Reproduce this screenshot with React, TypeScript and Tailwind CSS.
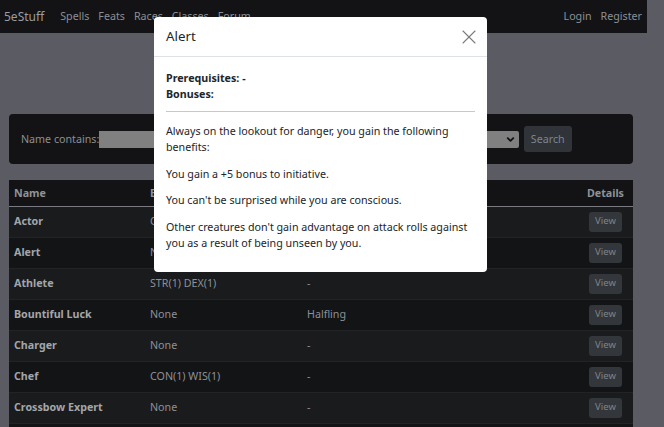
import { X, ChevronDown } from "lucide-react";

interface FeatRow {
  name: string;
  bonus: string;
  prereq: string;
}

const FEATS: FeatRow[] = [
  { name: "Actor", bonus: "CHA(1)", prereq: "-" },
  { name: "Alert", bonus: "None", prereq: "-" },
  { name: "Athlete", bonus: "STR(1) DEX(1)", prereq: "-" },
  { name: "Bountiful Luck", bonus: "None", prereq: "Halfling" },
  { name: "Charger", bonus: "None", prereq: "-" },
  { name: "Chef", bonus: "CON(1) WIS(1)", prereq: "-" },
  { name: "Crossbow Expert", bonus: "None", prereq: "-" },
  { name: "Defensive Duelist", bonus: "None", prereq: "DEX 13" },
];

function NavBar() {
  return (
    <nav className="flex h-[33px] items-center bg-[#131315] pl-[4px] pr-[5px] text-[10.7px] text-[#8b8f94]">
      <span className="mr-[16px] text-[12px] text-[#9a9da2]">5eStuff</span>
      <div className="flex gap-[9px]">
        <span>Spells</span>
        <span>Feats</span>
        <span>Races</span>
        <span>Classes</span>
        <span>Forum</span>
      </div>
      <div className="ml-auto flex gap-[9px]">
        <span>Login</span>
        <span>Register</span>
      </div>
    </nav>
  );
}

function FilterBar() {
  return (
    <div className="flex h-[50px] items-center rounded-[4px] bg-[#131315] pl-[12px] text-[10.7px] text-[#8b8f94]">
      <span>Name contains:</span>
      <div className="h-[17px] w-[150px] bg-[#808080]" />
      <span className="ml-[10px]">Category:</span>
      <div className="ml-[8px] flex h-[17px] w-[203px] items-center justify-end rounded-[2px] bg-[#808080] pr-[3px]">
        <ChevronDown size={11} strokeWidth={4} className="text-[#111]" />
      </div>
      <button className="ml-[5px] h-[26px] w-[48px] rounded-[3px] bg-[#303438] text-[10.7px] text-[#7b8690]">
        Search
      </button>
    </div>
  );
}

function FeatTable() {
  return (
    <table className="mt-[16px] w-full border-collapse text-[10.7px]">
      <thead>
        <tr className="h-[26px] border-b border-[#7a7b80] bg-[#131315] text-[#8f9297]">
          <th className="pl-[5px] text-left font-bold">Name</th>
          <th className="text-left font-bold">Bonuses</th>
          <th className="text-left font-bold">Prerequisites</th>
          <th className="pr-[9px] text-right font-bold">Details</th>
        </tr>
      </thead>
      <tbody>
        {FEATS.map((f, i) => (
          <tr
            key={f.name}
            className={`h-[31px] border-b border-[#222326] ${i % 2 === 0 ? "bg-[#1a1b1d]" : "bg-[#131416]"}`}
          >
            <td className="w-[141px] pl-[5px] font-bold text-[#a3a6ab]">{f.name}</td>
            <td className="w-[157px] text-[#8d9095]">{f.bonus}</td>
            <td className="text-[#8d9095]">{f.prereq}</td>
            <td className="pr-[11px] text-right">
              <button className="h-[20px] w-[33px] rounded-[3px] bg-[#33373b] text-[9.5px] text-[#7d858c]">
                View
              </button>
            </td>
          </tr>
        ))}
      </tbody>
    </table>
  );
}

function AlertModal() {
  return (
    <div className="absolute left-[154px] top-[17px] w-[333px] rounded-[4px] bg-white text-[10.7px] text-[#212529]">
      <div className="flex h-[40px] items-center justify-between border-b border-[#dee2e6] px-[12px]">
        <span className="text-[13.3px]">Alert</span>
        <X size={24} strokeWidth={1.1} className="mr-[-6px] text-[#7a7a7a]" />
      </div>
      <div className="px-[12px] pb-[21px] pt-[13px] leading-[16px]">
        <div className="font-bold">Prerequisites: -</div>
        <div className="font-bold">Bonuses:</div>
        <hr className="mb-[11px] mt-[9px] border-[#c8c8c8]" />
        <p className="mb-[10.7px]">
          Always on the lookout for danger, you gain the following benefits:
        </p>
        <p className="mb-[10.7px]">You gain a +5 bonus to initiative.</p>
        <p className="mb-[10.7px]">You can't be surprised while you are conscious.</p>
        <p>Other creatures don't gain advantage on attack rolls against you as a result of being unseen by you.</p>
      </div>
    </div>
  );
}

export default function App() {
  return (
    <div className="relative h-[427px] w-[664px] overflow-hidden bg-[#5b5b63] font-['Noto_Sans',sans-serif]">
      <div className="w-[647px]">
        <NavBar />
        <main className="ml-[9px] w-[624px] pt-[81px]">
          <FilterBar />
          <FeatTable />
        </main>
      </div>
      <AlertModal />
    </div>
  );
}
